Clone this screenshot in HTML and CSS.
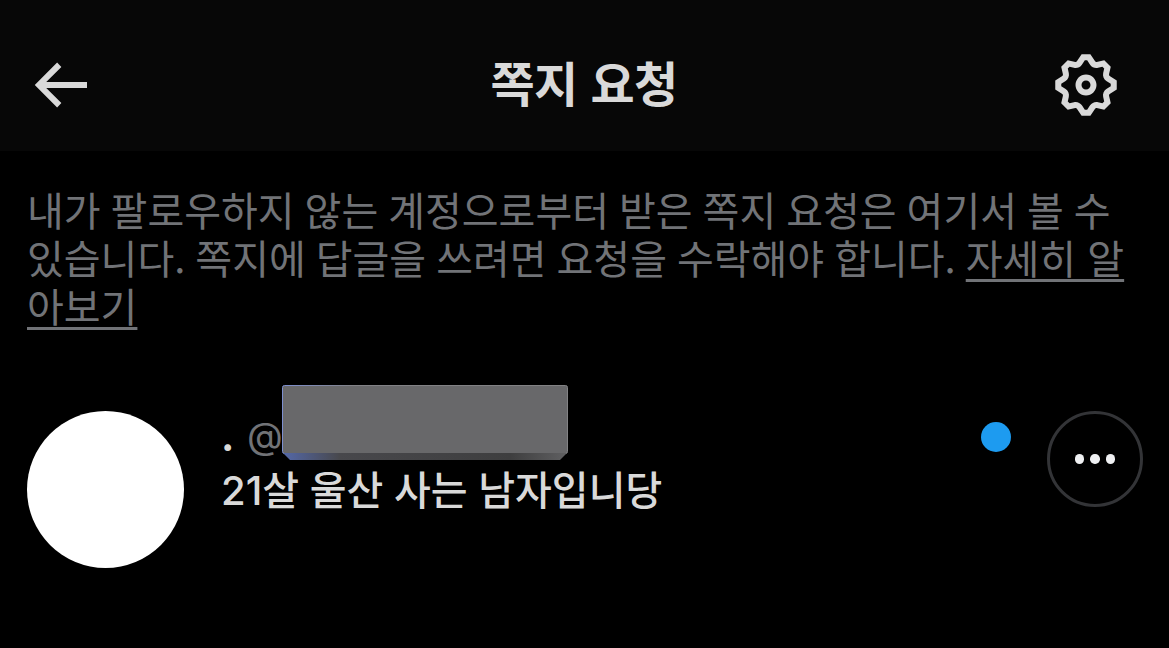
FILE: index.html
```html
<!DOCTYPE html>
<html lang="ko">

<head>
  <meta charset="UTF-8">
  <title>쪽지 요청</title>
  <link rel="stylesheet" href="styles.css">
</head>

<body>
  <header class="top-bar">
    <svg class="icon" viewBox="0 0 24 24">
      <path d="M7.414 13l5.043 5.04-1.414 1.42L3.586 12l7.457-7.46 1.414 1.42L7.414 11H21v2H7.414z" />
    </svg>
    <h1 class="title">쪽지 요청</h1>
    <svg class="icon" viewBox="0 0 24 24">
      <path d="M10.54 1.75h2.92l1.57 2.36c.11.17.32.25.53.21l2.53-.59 2.17 2.17-.58 2.54c-.05.2.04.41.21.53l2.36 1.57v2.92l-2.36 1.57c-.17.12-.26.33-.21.53l.58 2.54-2.17 2.17-2.53-.59c-.21-.04-.42.04-.53.21l-1.57 2.36h-2.92l-1.58-2.36c-.11-.17-.32-.25-.52-.21l-2.54.59-2.17-2.17.58-2.54c.05-.2-.03-.41-.21-.53l-2.35-1.57v-2.92L4.1 8.97c.18-.12.26-.33.21-.53L3.73 5.9 5.9 3.73l2.54.59c.2.04.41-.04.52-.21l1.58-2.36zm1.07 2l-.98 1.47C10.05 6.08 9 6.5 7.99 6.27l-1.46-.34-.6.6.33 1.46c.24 1.01-.18 2.07-1.05 2.64l-1.46.98v.78l1.46.98c.87.57 1.29 1.63 1.05 2.64l-.33 1.46.6.6 1.46-.34c1.01-.23 2.06.19 2.64 1.05l.98 1.47h.78l.97-1.47c.58-.86 1.63-1.28 2.65-1.05l1.45.34.61-.6-.34-1.46c-.23-1.01.18-2.07 1.05-2.64l1.47-.98v-.78l-1.47-.98c-.87-.57-1.28-1.63-1.05-2.64l.34-1.46-.61-.6-1.45.34c-1.02.23-2.07-.19-2.65-1.05l-.97-1.47h-.78zM12 10.5c-.83 0-1.5.67-1.5 1.5s.67 1.5 1.5 1.5c.83 0 1.5-.67 1.5-1.5s-.67-1.5-1.5-1.5zM8.5 12c0-1.93 1.56-3.5 3.5-3.5 1.93 0 3.5 1.57 3.5 3.5s-1.57 3.5-3.5 3.5c-1.94 0-3.5-1.57-3.5-3.5z" />
    </svg>
  </header>

  <main>
    <p class="notice">
      내가 팔로우하지 않는 계정으로부터 받은 쪽지 요청은 여기서 볼 수<br>
      있습니다. 쪽지에 답글을 쓰려면 요청을 수락해야 합니다. <a class="more-link">자세히 알<br>아보기</a>
    </p>

    <div class="request">
      <div class="avatar"></div>
      <div class="content">
        <div class="name-row">
          <span class="name">.</span>
          <span class="handle">@</span>
          <svg class="redacted" viewBox="0 0 286 76">
            <defs>
              <linearGradient id="bevel">
                <stop offset="0" stop-color="#5468a8" />
                <stop offset="0.2" stop-color="#48484c" />
                <stop offset="0.8" stop-color="#3e3e3f" />
                <stop offset="1" stop-color="#606062" />
              </linearGradient>
              <linearGradient id="edge">
                <stop offset="0" stop-color="#7d8fd0" />
                <stop offset="0.25" stop-color="#828286" />
                <stop offset="1" stop-color="#828284" />
              </linearGradient>
            </defs>
            <rect fill="#68686a" stroke="url(#edge)" x="0.5" y="0.5" width="285" height="68" rx="2" />
            <path fill="url(#bevel)" d="M1 68h284l-7 7H8z" />
          </svg>
        </div>
        <div class="message">21살 울산 사는 남자입니당</div>
      </div>
      <span class="unread"></span>
      <div class="more">
        <span></span>
        <span></span>
        <span></span>
      </div>
    </div>
  </main>
</body>

</html>
```
FILE: styles.css
```css
* {
  box-sizing: border-box;
}

body {
  margin: 0;
  min-height: 100vh;
  background-color: #000;
  color: #d9d9d9;
  font-family: "Noto Sans CJK KR", sans-serif;
}

.top-bar {
  display: flex;
  align-items: center;
  justify-content: space-between;
  height: 151px;
  padding: 19px 47px 0 24px;
  background-color: #070707;
}

.icon {
  width: 72px;
  height: 72px;
  fill: #d9d9d9;
}

.title {
  margin: 0;
  padding: 0 0 8px 22px;
  font-size: 48px;
  font-weight: bold;
  line-height: 60px;
  letter-spacing: -0.6px;
}

.notice {
  margin: 0;
  padding: 34px 0 0 27px;
  color: #717377;
  font-size: 40px;
  line-height: 48px;
  white-space: nowrap;
  word-spacing: -1.2px;
}

.more-link {
  text-decoration: underline;
  text-decoration-thickness: 3px;
  text-underline-offset: 5px;
  word-spacing: 0;
}

.request {
  display: flex;
  align-items: flex-start;
  padding: 56px 26px 0 27px;
}

.avatar {
  width: 157px;
  height: 157px;
  margin-top: 26px;
  border-radius: 50%;
  background-color: #fff;
}

.content {
  flex: 1;
  padding-left: 37px;
  font-family: "Inter", "Noto Sans CJK KR", sans-serif;
}

.name-row {
  display: flex;
  height: 76px;
  font-size: 40px;
  line-height: 48px;
}

.name {
  width: 26px;
  padding-top: 28px;
  font-weight: bold;
}

.handle {
  width: 35px;
  padding-top: 27px;
  color: #717377;
  font-size: 37px;
}

.redacted {
  width: 286px;
  height: 76px;
}

.message {
  margin-top: 6px;
  font-size: 40px;
  font-weight: 500;
  line-height: 48px;
}

.unread {
  width: 30px;
  height: 30px;
  margin: 37px 36px 0 0;
  border-radius: 50%;
  background-color: #1d9bf0;
}

.more {
  display: flex;
  align-items: center;
  justify-content: center;
  gap: 6px;
  width: 96px;
  height: 96px;
  margin-top: 26px;
  border: 3px solid #333437;
  border-radius: 50%;
}

.more span {
  width: 9.5px;
  height: 9.5px;
  border-radius: 50%;
  background-color: #eff0f2;
}
```
